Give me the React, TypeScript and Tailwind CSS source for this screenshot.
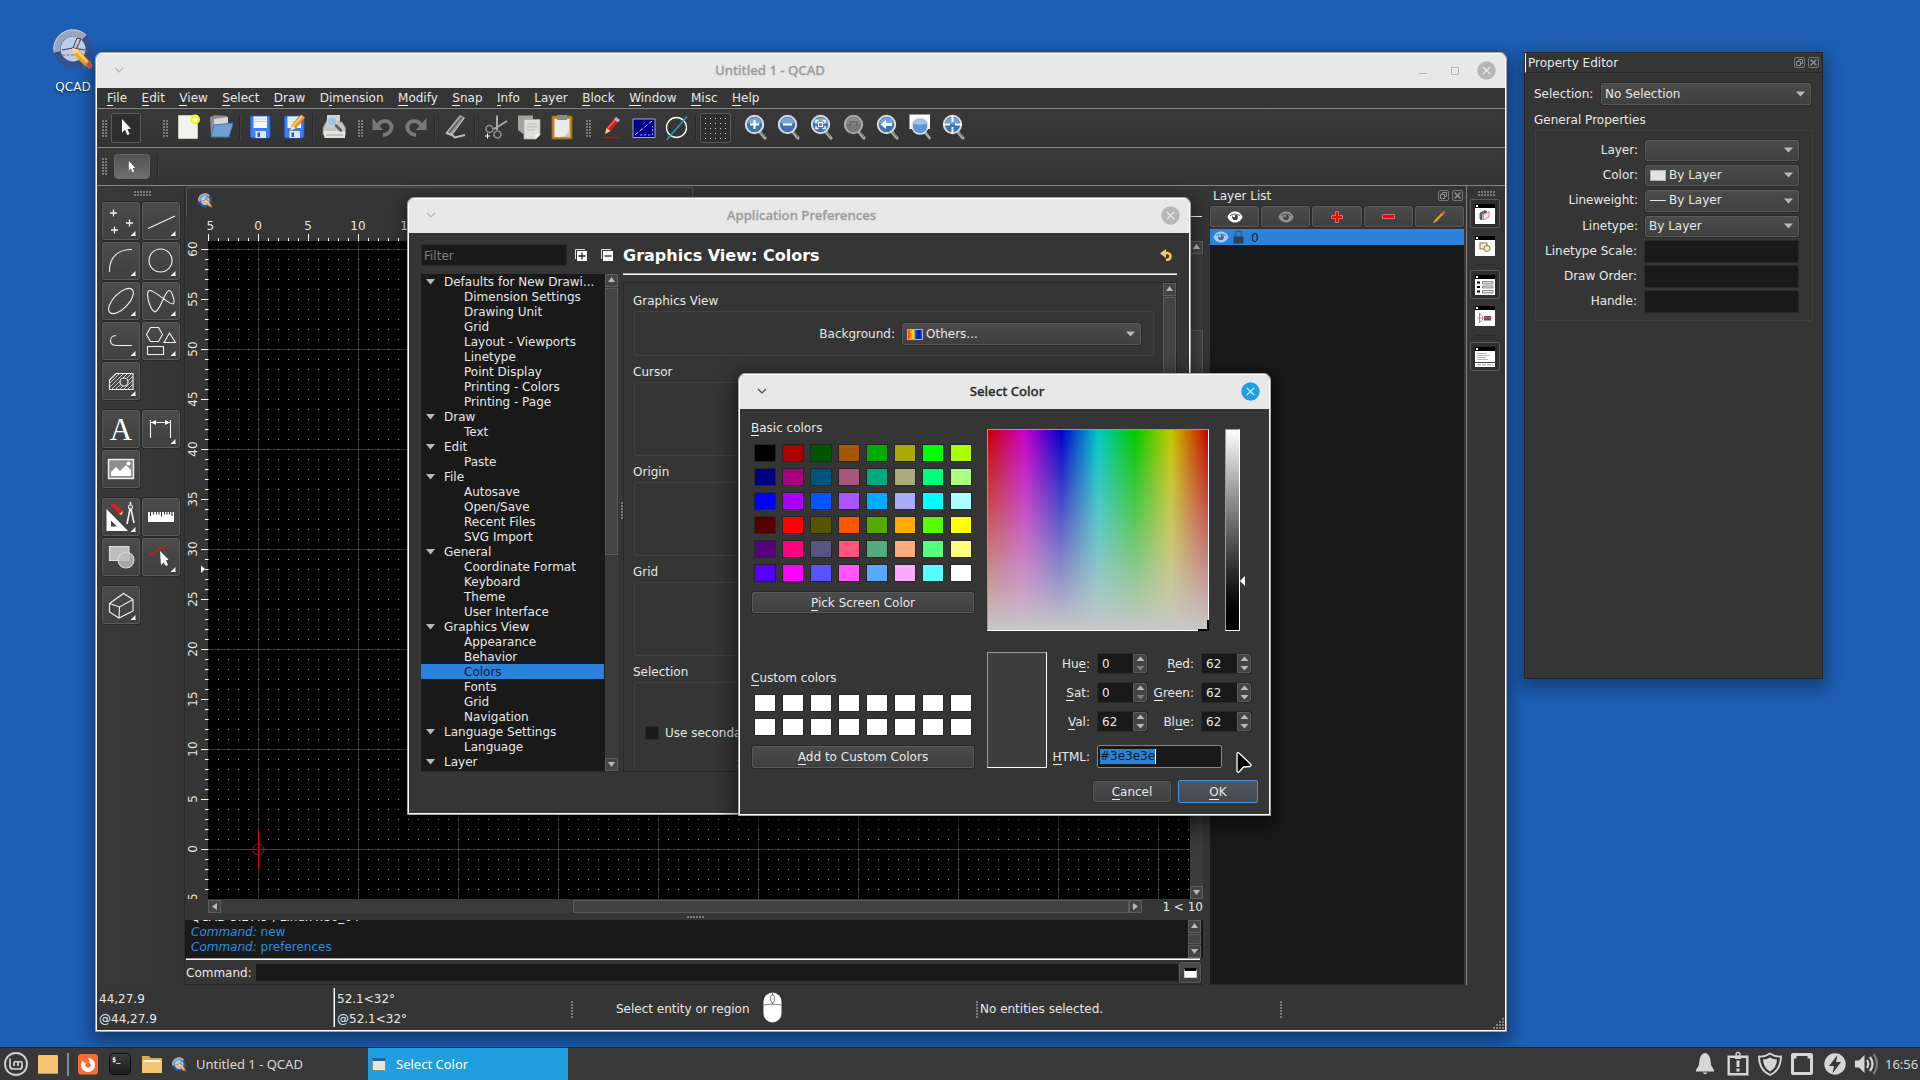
import React from "react";

type Kids = { children?: React.ReactNode };
const FONT = "font-['DejaVu_Sans',sans-serif]";
const UI = "font-['Noto_Sans',sans-serif]";

/* ---------- small building blocks ---------- */

function Tri({ dir }: { dir: "up" | "down" | "left" | "right" }) {
  const d = {
    up: "M0 5L3.5 0L7 5Z",
    down: "M0 1L3.5 6L7 1Z",
    left: "M6 0L1 3.5L6 7Z",
    right: "M1 0L6 3.5L1 7Z",
  }[dir];
  return (
    <svg width="7" height="7" viewBox="0 0 7 7" className="block shrink-0">
      <path d={d} fill="#b9b9b9" />
    </svg>
  );
}

function Grip({ cols, rows }: { cols: number; rows: number }) {
  const dots = [];
  for (let c = 0; c < cols; c++) for (let r = 0; r < rows; r++) dots.push(<rect key={c + "-" + r} x={c * 3} y={r * 3} width="2" height="2" fill="#7b7b7b" />);
  return (
    <svg width={cols * 3 - 1} height={rows * 3 - 1} className="block shrink-0">
      {dots}
    </svg>
  );
}

function BarGrip() {
  return (
    <div className="flex w-[13px] shrink-0 justify-center pl-[2px]">
      <Grip cols={2} rows={6} />
    </div>
  );
}

function BarSep() {
  return (
    <div className="flex h-6 w-[6px] shrink-0 justify-center">
      <div className="w-px bg-[#2a2a2a]" />
      <div className="w-px bg-[#404040]" />
    </div>
  );
}

function ScrollButton({ dir }: { dir: "up" | "down" | "left" | "right" }) {
  return (
    <div className="flex h-[13px] w-[13px] shrink-0 items-center justify-center border border-[#5e5e5e] bg-[#444444]">
      <Tri dir={dir} />
    </div>
  );
}

const BTN = "rounded-[2px] border border-[#5a5a5a] bg-linear-to-b from-[#4b4b4b] to-[#3f3f3f] outline outline-1 outline-[#2a2a2a]";

function Combo({ className, icon, text }: { className: string; icon?: React.ReactNode; text?: string }) {
  return (
    <div className={`flex shrink-0 items-center ${BTN} ${className}`}>
      {icon}
      <span className="leading-[15px]">{text}</span>
      <svg width="9" height="6" viewBox="0 0 9 6" className="mr-[5px] ml-auto block">
        <path d="M0 0.5H9L4.5 5.5Z" fill="#b9b9b9" />
      </svg>
    </div>
  );
}

function Key({ label }: { label: string }) {
  const [a, b, c] = label.split("_");
  return (
    <>
      {a}
      <span className="border-b border-[#eeeeee]">{b}</span>
      {c}
    </>
  );
}

function CloseDot({ active }: { active?: boolean }) {
  return (
    <svg width="19" height="19" viewBox="0 0 19 19" className="block shrink-0">
      <circle cx="9.5" cy="9.5" r="9.2" fill={active ? "#20a0e0" : "#b7b7b7"} />
      <path d="M5.8 5.8L13.2 13.2M13.2 5.8L5.8 13.2" stroke="#f2f2f2" strokeWidth="1.1" />
    </svg>
  );
}

function TitleBar({ title, active, main }: { title: string; active?: boolean; main?: boolean }) {
  return (
    <div className="flex h-[35px] shrink-0 items-center border-t border-white bg-[#e8e8e8] pb-[2px]">
      <div className={`shrink-0 ${main ? "w-[40px]" : "w-[58px]"}`}>
        <svg width="10" height="7" viewBox="0 0 10 7" className="ml-[17px] block">
          <path d="M1 1L5 5L9 1" fill="none" stroke={active ? "#444444" : "#b4b4b4"} strokeWidth="1.2" />
        </svg>
      </div>
      <div className={`flex-1 pl-[3px] text-center text-[13.2px] leading-[18px] font-medium ${UI} ${active ? "text-[#2b2b2b] [-webkit-text-stroke:0.3px_#2b2b2b]" : "text-[#9d9d9d] [-webkit-text-stroke:0.3px_#9d9d9d]"}`}>{title}</div>
      <div className={`flex shrink-0 items-center justify-end pr-[9px] ${main ? "w-[105px]" : "w-[56px]"}`}>
        {main && (
          <svg width="60" height="19" viewBox="0 0 60 19" className="block">
            <path d="M2 12.5H10" stroke="#b4b4b4" />
            <path d="M34.5 6.5H41.5V13.5H34.5Z" stroke="#b4b4b4" fill="none" />
          </svg>
        )}
        <CloseDot active={active} />
      </div>
    </div>
  );
}

function QcadIcon({ size }: { size: number }) {
  return (
    <svg width={size} height={size} viewBox="0 0 42 42" className="block shrink-0">
      <circle cx="20" cy="21" r="16" fill="#b9cfe8" />
      <circle cx="20" cy="21" r="16" fill="none" stroke="#34508f" strokeWidth="7" />
      <path d="M4 24A16 16 0 0 1 31 9.500" fill="none" stroke="#9aa4bd" strokeWidth="7" />
      <path d="M1 22A19 19 0 0 1 33 7" fill="none" stroke="#c6cbd8" strokeWidth="1" />
      <path d="M9 22L20 20L32 22M20 20L24 10L28 11L22 23" fill="none" stroke="#333f55" strokeWidth="1" />
      <path d="M9 27H22L27 12" fill="none" stroke="#d23c4a" strokeWidth="1" strokeDasharray="3 1.500" />
      <path d="M19 20L26 22L38 35L33 39L21 27Z" fill="#f5a21c" />
      <path d="M19 20L24 21L35.500 33.500L34 35Z" fill="#ffdc5e" />
      <path d="M19 20L25.500 22L21 26.500Z" fill="#f4d9ad" />
      <path d="M36 33L40.500 38L36.500 41.500L32.500 37.500Z" fill="#c4605c" />
    </svg>
  );
}

/* ---------- main tool bars ---------- */

function Ic({ children, w = 26 }: Kids & { w?: number }) {
  return (
    <div className="flex w-[33px] shrink-0 justify-center pb-[2px]">
      <svg width={w} height="28" viewBox="0 0 26 28" className="block shrink-0">
        {children}
      </svg>
    </div>
  );
}

const ARROW = "M9 6L9 19.500L12 16.800L14.300 22L16.600 21L14.300 16L18 15.800Z";

function Floppy() {
  return (
    <>
      <path d="M4 3H22Q23 3 23 4V24Q23 25 22 25H5L3.500 23.500V4Z" fill="#3f7ff0" stroke="#2458c4" />
      <path d="M6.500 3.500H20V15H6.500Z" fill="#f3f6fc" />
      <path d="M8.500 18H19V25H8.500Z" fill="#dfe6f4" />
      <path d="M10.500 19.500H13V24H10.500Z" fill="#2b57b8" />
      <path d="M7.500 6H19M7.500 8.500H19" stroke="#c5d0e6" />
    </>
  );
}

function Lens({ children, gray }: Kids & { gray?: boolean }) {
  return (
    <Ic>
      <path d="M17.500 18.500L23 25" stroke="#a9a9a4" strokeWidth="3.200" strokeLinecap="round" />
      <path d="M18 18L23 24" stroke="#5e5e5a" strokeWidth="1" />
      <circle cx="12.500" cy="11.500" r="8.700" fill={gray ? "#777777" : "#3a74b4"} stroke={gray ? "#aaaaaa" : "#d8dcdf"} strokeWidth="2" />
      <path d="M5.500 10A7.200 7.200 0 0 1 19.500 10Q12.500 13 5.500 10Z" fill={gray ? "#8c8c8c" : "#74a3d6"} />
      {children}
    </Ic>
  );
}

function ToolBar() {
  const grid = [];
  for (let i = 0; i < 5; i++) for (let j = 0; j < 5; j++) grid.push(<rect key={i * 5 + j} x={3 + i * 5} y={3 + j * 5} width="1" height="1" fill="#d6d6d6" />);
  return (
    <div className="flex h-[38px] shrink-0 items-center bg-linear-to-b from-[#393939] to-[#333333]">
      <BarGrip />
      <div className="ml-px flex h-[30px] w-[30px] shrink-0 items-center justify-center rounded-[2px] border border-[#5a5a5a] bg-[#2e2e2e]">
        <svg width="24" height="26" viewBox="0 0 24 26"><path d={ARROW} fill="#fff" transform="translate(-1 -2)" /></svg>
      </div>
      <div className="w-[17px]" />
      <BarGrip />
      <Ic>
        <path d="M3.500 2.500H22.500V25.500H3.500Z" fill="#f3f3ee" stroke="#c9c9c4" />
        <circle cx="20" cy="6.500" r="5" fill="#f6f03a" />
        <circle cx="20" cy="6.500" r="2.500" fill="#fffcc0" />
      </Ic>
      <Ic>
        <path d="M2 4L7 2L19 3L20 9V22L3 23Z" fill="#8d8d8a" />
        <path d="M6 6L20 4V12H6Z" fill="#d7d7d4" />
        <path d="M6 12L25 10L21 24H3Z" fill="#6fa0d6" stroke="#4277b3" />
      </Ic>
      <BarSep />
      <Ic><Floppy /></Ic>
      <div className="w-px" />
      <Ic>
        <Floppy />
        <path d="M9 18L11 12L20 1.500L24 4.500L14.500 15.500Z" fill="#f39a27" stroke="#a85d12" strokeWidth=".6" />
        <path d="M9 18L11 12L14.500 15.500Z" fill="#f7e2bb" />
        <path d="M12 13L21 3" stroke="#ffd77c" strokeWidth="1.300" />
      </Ic>
      <BarSep />
      <div className="w-px" />
      <Ic>
        <path d="M6 2H19V14H6Z" fill="#cdd4da" />
        <path d="M2 15L5 9H21L24.500 15V22H2Z" fill="#c4c4c1" stroke="#8e8e8b" strokeWidth=".7" />
        <path d="M2.500 18H24V25H3.500Z" fill="#e4e4e1" />
        <path d="M5 22H22" stroke="#a5a5a2" />
        <circle cx="11" cy="8.500" r="4.800" fill="#9fc3e8" stroke="#c9d4de" strokeWidth="1.500" />
        <path d="M15 12.500L20 17.500" stroke="#5a5a58" strokeWidth="2.500" strokeLinecap="round" />
      </Ic>
      <div className="w-[3px]" />
      <BarGrip />
      <Ic>
        <path d="M13 22C24 21 24 8 15 8C11 8 9 10 7.500 13" fill="none" stroke="#787878" strokeWidth="4" />
        <path d="M2.500 5V17H13Z" fill="#787878" />
      </Ic>
      <Ic>
        <path d="M13 22C2 21 2 8 11 8C15 8 17 10 18.500 13" fill="none" stroke="#787878" strokeWidth="4" />
        <path d="M23.500 5V17H13Z" fill="#787878" />
      </Ic>
      <BarSep />
      <div className="w-px" />
      <Ic>
        <path d="M3 20L17 2.500L21.500 5L9 22Z" fill="#9c9c99" stroke="#cfcfcc" strokeWidth=".8" />
        <path d="M5 21L19 4" stroke="#5b5b59" strokeWidth="1.500" />
        <path d="M3 20L9 22L12 24.500L22 22" fill="none" stroke="#bdbdba" strokeWidth="2" />
      </Ic>
      <BarSep />
      <div className="w-px" />
      <Ic>
        <path d="M14 17L14 2.500M11 16L24 8" stroke="#a9a9a6" strokeWidth="2" />
        <circle cx="6.500" cy="16" r="3.500" fill="none" stroke="#8d8d8a" strokeWidth="1.700" />
        <circle cx="14.500" cy="21.500" r="3.500" fill="none" stroke="#8d8d8a" strokeWidth="1.700" />
        <path d="M2 23H7M4.500 20.500V25.500" stroke="#ffffff" />
      </Ic>
      <Ic>
        <path d="M2 2.500H17V21H7L2 17Z" fill="#a3a3a0" />
        <path d="M8 6.500H24V22L20 26H8Z" fill="#dededb" stroke="#a9a9a6" strokeWidth=".8" />
        <path d="M11 11H21M11 14H21M11 17H19" stroke="#b9b9b6" />
        <path d="M24 21L19.500 26V21Z" fill="#f7f7f7" />
      </Ic>
      <Ic>
        <path d="M3 3H23V26H3Z" fill="#c48a2c" stroke="#8d5e15" />
        <path d="M5.500 6H20.500V24H5.500Z" fill="#ececea" />
        <path d="M8 2H18V7H8Z" fill="#8b8b86" />
        <path d="M20.500 18L14.500 24H20.500Z" fill="#c6c6c4" />
      </Ic>
      <div className="w-[3px]" />
      <BarGrip />
      <Ic>
        <path d="M5 24.500H22" stroke="#c40d0d" strokeWidth="1.500" />
        <path d="M7 21L8.500 15L17 5L21 8L12.500 18Z" fill="#d91616" />
        <path d="M10 15L18 6" stroke="#ff6b5e" strokeWidth="1.200" />
        <path d="M7 21L8.500 15L12.500 18Z" fill="#f2d0a5" />
        <path d="M16 6.500L18 4L22 7L20 9.500Z" fill="#b6b6b6" />
      </Ic>
      <Ic>
        <path d="M2 6H24V24.500H2Z" fill="#00008b" stroke="#a5a5c8" />
        <path d="M4 22L21 8" stroke="#c8c8ff" strokeDasharray="4 2" />
        <path d="M9 22H21.500V13" fill="none" stroke="#9c9cf0" strokeDasharray="2.500 1.500" />
      </Ic>
      <Ic>
        <circle cx="12.500" cy="14.500" r="10" fill="none" stroke="#ffffff" strokeWidth="1.300" />
        <path d="M3 26.500L23 3.500" stroke="#22a6b8" strokeWidth="1.300" />
      </Ic>
      <BarSep />
      <div className="ml-px flex h-[30px] w-[31px] shrink-0 items-center justify-center rounded-[3px] border border-[#5a5a5a] bg-[#2e2e2e]">
        <svg width="27" height="27" viewBox="0 0 27 27">{grid}</svg>
      </div>
      <div className="w-px" />
      <BarSep />
      <Lens><path d="M8 11.500H17M12.500 7V16" stroke="#fff" strokeWidth="2.200" /></Lens>
      <Lens><path d="M8 11.500H17" stroke="#fff" strokeWidth="2.200" /></Lens>
      <Lens>
        <path d="M8 10V7.500H10.500M14.500 7.500H17V10M17 13V15.500H14.500M10.500 15.500H8V13" fill="none" stroke="#fff" strokeWidth="1.400" />
        <rect x="10.500" y="9.500" width="4" height="4" fill="none" stroke="#fff" />
      </Lens>
      <Lens gray><path d="M9 13V9H16V13" fill="none" stroke="#666" strokeWidth="1.500" /></Lens>
      <Lens><path d="M6.500 11.500L12 7V10H18V13H12V16Z" fill="#fff" /></Lens>
      <Ic>
        <path d="M17 18L22.500 25" stroke="#a9a9a4" strokeWidth="2.800" strokeLinecap="round" />
        <path d="M2.500 1.500H23V16H2.500Z" fill="#ffffff" />
        <circle cx="13" cy="13" r="8" fill="#5f97d6" stroke="#e3e6e9" strokeWidth="1.500" />
        <path d="M6.500 10.500A7 7 0 0 1 19.500 10.500Q13 13 6.500 10.500Z" fill="#9cc2ee" />
      </Ic>
      <Lens>
        <path d="M12.500 2.500V9M12.500 14V20.500M3.500 11.500H10M15 11.500H21.500" stroke="#fff" strokeWidth="2" />
      </Lens>
    </div>
  );
}

const MENUS = ["_F_ile", "_E_dit", "_V_iew", "_S_elect", "_D_raw", "D_i_mension", "_M_odify", "_S_nap", "_I_nfo", "_L_ayer", "_B_lock", "_W_indow", "_M_isc", "_H_elp"];

/* ---------- left tool palette ---------- */

function Tool({ children, flat }: Kids & { flat?: boolean }) {
  return (
    <div className={`h-[38px] w-[38px] shrink-0 ${BTN}`}>
      <svg width="36" height="36" viewBox="1 1 36 36" className="block" fill="none" stroke="#f2f2f2" strokeWidth="1.100">
        {children}
        {!flat && <path d="M33.500 29V34H28.500Z" fill="#fff" stroke="none" />}
      </svg>
    </div>
  );
}

function Palette() {
  return (
    <div className="flex w-[88px] shrink-0 flex-col border-r border-[#2a2a2a] bg-linear-to-r from-[#393939] to-[#343434]">
      <div className="flex h-[16px] items-center justify-center pb-px pl-[4px]">
        <Grip cols={6} rows={2} />
      </div>
      <div className="flex flex-col gap-[10px] pl-[5px]">
        <div className="flex flex-wrap gap-[2px]">
          <Tool><path d="M8 11H15M11.500 7.500V14.500M24 21H31M27.500 17.500V24.500M9 28H16M12.500 24.500V31.500" strokeWidth="1.300" /></Tool>
          <Tool><path d="M6 26.500L33 14" /></Tool>
          <Tool><path d="M7.500 30C7 15 16 7.500 30 7.500" /></Tool>
          <Tool><circle cx="18.500" cy="18.500" r="11.500" /></Tool>
          <Tool><ellipse cx="19" cy="19" rx="16" ry="7.500" transform="rotate(-46 19 19)" /></Tool>
          <Tool><path d="M13 30C8 28 2 8 8 8.500C14 9 26 22 31 22C34 22 30 8 27 8.500C22 10 19 28 13 30Z" /></Tool>
          <Tool><path d="M14 13.500C6.500 14 6.500 23.500 15 23.500H30" /></Tool>
          <Tool><path d="M4.500 12.500L8.500 5.500H16.500L20.500 12.500L16.500 19.500H8.500ZM22 20.500L27.500 11L33.500 20.500ZM5.500 24.500H21.500V32.500H5.500Z" /></Tool>
          <Tool>
            <path d="M7.500 18L14 11.500H31V27.500H7.500Z" />
            <path d="M8 21L17 12M8 25L21 12M10 27L25 12M14 27L20 21M25 16L29 12M18 27L31 14M22 27L31 18M26 27L31 22" strokeWidth=".8" />
            <circle cx="22" cy="20" r="4" fill="#484848" />
          </Tool>
        </div>
        <div className="flex flex-wrap gap-[2px]">
          <div className={`flex h-[38px] w-[38px] items-center justify-center ${BTN} font-['Liberation_Serif',serif] text-[31px] leading-none text-white`}>A</div>
          <Tool>
            <path d="M8.500 10V28M28.500 10V28M9 12.500H28" />
            <path d="M9 12.500L14 10V15ZM28 12.500L23 10V15Z" fill="#fff" stroke="none" />
          </Tool>
          <Tool flat>
            <rect x="6.500" y="9.500" width="25" height="19" fill="#8e8e8e" strokeWidth="1.400" />
            <path d="M9 26V22L14 17L18 21L24 15L29 20V26Z" fill="#fff" stroke="none" />
            <circle cx="26.500" cy="13.500" r="2" fill="#fff" stroke="none" />
          </Tool>
        </div>
        <div className="flex flex-wrap gap-[2px]">
          <Tool>
            <path fillRule="evenodd" d="M4.500 11L26 33H4.500ZM9 22.500V28.500H15Z" fill="#fff" stroke="none" />
            <path d="M9 7L12 5L21 13L20 17L17 16Z" fill="#d92020" stroke="none" />
            <path d="M17 16L20 17L21 13Z" fill="#f0c67c" stroke="none" />
            <circle cx="28.500" cy="9" r="2" />
            <path d="M28.500 4V7M28 11L25 26M29 11L32 25" strokeWidth="1.600" />
          </Tool>
          <Tool flat>
            <path d="M6 14H32V24H6Z" fill="#fff" stroke="none" />
            <path d="M8.500 14V18M11.500 14V16.500M14.500 14V16.500M17 14V16.500M19.500 14V18.500M22.500 14V16.500M25 14V16.500M27.500 14V16.500M30 14V18" stroke="#333" />
          </Tool>
          <Tool flat>
            <path d="M7.500 8.500H27V22.500H7.500Z" fill="#bdbdbd" stroke="#e0e0e0" />
            <circle cx="24" cy="22" r="8" fill="#bdbdbdd0" stroke="#d8d8d8" />
          </Tool>
          <Tool>
            <path d="M6 18L26 6.500" stroke="#ee1111" />
            <path d="M18 13L19 27L21.500 24.500L24 28L26 27L24 22.500L26.500 21.500Z" fill="#fff" stroke="none" />
          </Tool>
        </div>
        <Tool><path d="M7.500 17.500L21.500 7.500L31 13.500V25L17 32L7.500 26ZM7.500 17.500L17.500 21L31 13.500M17.500 21L17 32" /></Tool>
      </div>
    </div>
  );
}

/* ---------- drawing area with rulers ---------- */

function Drawing() {
  const hticks = [];
  for (let i = -5; i <= 93; i++) {
    const x = 258.5 + i * 10;
    hticks.push(<path key={i} d={`M${x} ${i % 5 === 0 ? 234 : 238}V241`} stroke="#fff" />);
  }
  const vticks = [];
  for (let i = -4; i <= 60; i++) {
    const y = 849.5 - i * 10;
    vticks.push(<path key={i} d={`M${i % 5 === 0 ? 201 : 205} ${y}H208`} stroke="#fff" />);
  }
  const vlines = Array.from({ length: 10 }, (_, i) => 258.5 + i * 100);
  const hlines = Array.from({ length: 7 }, (_, i) => 249.5 + i * 100);
  return (
    <svg width="1004" height="682" viewBox="186 217 1004 682" className="block shrink-0" fontFamily="DejaVu Sans" fontSize="12" fill="#e4e4e4">
      <defs>
        <pattern id="dots" x="208" y="249" width="10" height="10" patternUnits="userSpaceOnUse">
          <rect width="1" height="1" fill="#8e8e8e" />
        </pattern>
      </defs>
      <rect x="208" y="241" width="982" height="658" fill="#000" />
      {vlines.map((x) => <path key={x} d={`M${x} 241V899`} stroke="#333" />)}
      {hlines.map((y) => <path key={y} d={`M208 ${y}H1190`} stroke="#333" />)}
      <rect x="208" y="241" width="982" height="658" fill="url(#dots)" />
      {hticks}
      {vticks}
      <path d="M201 565.500L205 569L201 573Z" fill="#fff" />
      {[0, 5, 10, 15].map((n) => (
        <text key={n} x={258 + n * 10} y="230" textAnchor="middle">{n}</text>
      ))}
      <text x="206.500" y="230">5</text>
      {Array.from({ length: 13 }, (_, i) => i * 5).map((n) => (
        <text key={n} transform={`translate(197 ${849 - n * 10}) rotate(-90)`} textAnchor="middle">{n}</text>
      ))}
      <text transform="translate(197 901) rotate(-90)">5</text>
      <path d="M258.500 829V870M238 849.500H279" stroke="#e00000" />
      <circle cx="258.500" cy="849.500" r="5.500" fill="none" stroke="#a01818" />
    </svg>
  );
}

function Central() {
  return (
    <div className="flex min-w-0 flex-1 flex-col">
      <div className="flex h-[31px] shrink-0 pl-px">
        <div className="mt-px flex w-[507px] border-t border-r border-l border-[#505050] pt-[5px] pl-[11px]">
          <QcadIcon size={15} />
        </div>
        <div className="mr-[1px] flex-1 border-b border-[#f0f0f0]" />
      </div>
      <div className="flex h-[682px] shrink-0 pl-px">
        <Drawing />
        <div className="flex w-[13px] flex-col bg-[#3b3b3b]">
          <div className="h-[24px] bg-[#353535]" />
          <ScrollButton dir="up" />
          <div className="mt-[76px] h-[300px] border border-[#5a5a5a] bg-[#444444]" />
          <div className="flex-1" />
          <ScrollButton dir="down" />
        </div>
      </div>
      <div className="mt-px flex h-[13px] shrink-0 items-center pl-[23px]">
        <ScrollButton dir="left" />
        <div className="h-[13px] w-[352px] bg-[#3b3b3b]" />
        <div className="h-[13px] w-[556px] border border-[#5a5a5a] bg-[#434343]" />
        <ScrollButton dir="right" />
        <div className="flex-1 pt-px text-right leading-[13px]">1 &lt; 10</div>
      </div>
      <div className="flex h-[7px] shrink-0 items-center pl-[502px]">
        <Grip cols={6} rows={1} />
      </div>
      <div className="flex h-[38px] shrink-0 bg-[#191919] pr-[2px] pl-px">
        <div className="flex flex-1 flex-col justify-end overflow-hidden pb-[3px] pl-[5px] leading-[15px] text-[#2e8de4]">
          <div className="shrink-0 text-[#eeeeee]">QCAD 3.27.9 , Linux x86_64</div>
          <div className="shrink-0"><i>Command:</i> new</div>
          <div className="shrink-0"><i>Command:</i> preferences</div>
        </div>
        <div className="flex w-[13px] flex-col justify-between bg-[#3b3b3b]">
          <ScrollButton dir="up" />
          <div className="h-[10px] border border-[#5a5a5a] bg-[#444444]" />
          <ScrollButton dir="down" />
        </div>
      </div>
      <div className="mr-[3px] ml-px h-[2px] shrink-0 border-t border-[#a0a0a0] bg-white" />
      <div className="mt-[2px] flex h-[21px] shrink-0 items-center pl-px">
        <span className="w-[70px] pt-[2px] leading-[15px]">Command:</span>
        <div className="h-[17px] w-[922px] bg-[#191919]" />
        <div className={`ml-px flex h-[21px] w-[22px] items-center justify-center ${BTN}`}>
          <div className="h-[10px] w-[13px] border border-t-[3px] border-[#cccccc] border-t-black bg-white" />
        </div>
      </div>
      <div className="mt-px h-px shrink-0 bg-[#2a2a2a]" />
    </div>
  );
}

/* ---------- docks on the right ---------- */

function DockButtons() {
  return (
    <svg width="25" height="11" viewBox="0 0 25 11" className="ml-auto block" fill="none" stroke="#909090">
      <rect x=".5" y=".5" width="10" height="10" rx="1.500" stroke="#777777" />
      <path d="M4.500 4.500V2.500H8.500V6.500H6.500M2.500 4.500H6.500V8.500H2.500Z" />
      <rect x="14.500" y=".5" width="10" height="10" rx="1.500" stroke="#777777" />
      <path d="M16.500 2.500L22.500 8.500M22.500 2.500L16.500 8.500" strokeWidth="1.500" />
    </svg>
  );
}

function Eye({ color, pupil }: { color: string; pupil: string }) {
  return (
    <svg width="16" height="12" viewBox="0 0 16 12" className="block shrink-0">
      <path d="M0.500 6C2 2 5 .5 8 .5S14 2 15.500 6C14 10 11 11.500 8 11.500S2 10 0.500 6Z" fill={color} />
      <path d="M3 5C5 2.500 11 2.500 13 5" stroke={pupil} fill="none" strokeWidth=".8" />
      <circle cx="8" cy="6.200" r="2.800" fill={pupil} />
      <circle cx="7" cy="5" r="1.200" fill={color} />
    </svg>
  );
}

function LayerList() {
  const icons = [
    <Eye key="a" color="#ffffff" pupil="#3b3b3b" />,
    <Eye key="b" color="#8f8f8f" pupil="#454545" />,
    <svg key="c" width="12" height="12" viewBox="0 0 12 12"><path d="M4.500 .5H7.500V4.500H11.500V7.500H7.500V11.500H4.500V7.500H.5V4.500H4.500Z" fill="#f00" stroke="#e08080" strokeWidth=".8" /></svg>,
    <svg key="d" width="13" height="5" viewBox="0 0 13 5"><path d="M.5 .5H12.500V4.500H.5Z" fill="#f00" stroke="#e08080" strokeWidth=".8" /></svg>,
    <svg key="e" width="15" height="14" viewBox="0 0 15 14"><path d="M1 13L2.500 10L11.500 1L13.500 2.500L4 12Z" fill="#d8a02a" /><path d="M11.500 1L13.500 2.500L11 5L9.500 3Z" fill="#e04a30" /></svg>,
  ];
  return (
    <div className="flex w-[256px] shrink-0 flex-col">
      <div className="flex h-[19px] items-center pr-[3px] pl-[3px]">
        <span className="pt-[2px] leading-[15px]">Layer List</span>
        <DockButtons />
      </div>
      <div className="mt-px flex h-[21px] gap-[2px] pr-[2px]">
        {icons.map((ic, i) => (
          <div key={i} className={`flex flex-1 items-center justify-center ${BTN}`}>{ic}</div>
        ))}
      </div>
      <div className="mt-[2px] mr-[2px] flex-1 border-b border-[#2a2a2a] bg-[#191919]">
        <div className="flex h-[16px] items-center bg-[#2a82da] pl-[3px]">
          <Eye color="#a9cdf2" pupil="#2a6cb4" />
          <svg width="11" height="14" viewBox="0 0 11 14" className="ml-[4px] block shrink-0">
            <path d="M2.500 7V4C2.500 0 8.500 0 8.500 4V7" fill="none" stroke="#4a5966" strokeWidth="1.500" />
            <path d="M.5 6.500H10.500V13.500H.5Z" fill="#2b4155" />
          </svg>
          <span className="ml-[7px] pt-[2px] leading-[15px] text-[#10202f]">0</span>
        </div>
      </div>
    </div>
  );
}

function PanelIcon({ children, framed }: Kids & { framed?: boolean }) {
  return (
    <div className={`flex h-[29px] w-[30px] items-center justify-center rounded-[2px] border ${framed ? "border-[#5c5c5c] bg-[#2e2e2e]" : "border-transparent"}`}>
      <svg width="20" height="20" viewBox="0 0 20 20" className="block" fill="none">
        <rect width="20" height="20" fill="#fff" />
        <rect width="20" height="4" fill="#000" />
        <rect x="1" y="1" width="2" height="2" fill="#fff" />
        {children}
      </svg>
    </div>
  );
}

function DockBar() {
  return (
    <div className="flex w-[39px] shrink-0 flex-col items-center border-l border-[#808080] pr-[2px]">
      <div className="flex h-[13px] items-center pt-[2px] pl-[2px]"><Grip cols={6} rows={2} /></div>
      <PanelIcon framed>
        <path d="M5 9L10 6.500L12 8L7 10V16L5 15Z" fill="#777" stroke="#333" strokeWidth=".7" />
        <path d="M8.500 10.500L14 7.500V13L8.500 16Z" fill="#fbe9e9" stroke="#c55" strokeWidth=".7" />
      </PanelIcon>
      <div className="mt-[3px]">
        <PanelIcon>
          <rect x="5" y="7" width="7" height="6" fill="#f6edc6" stroke="#857b4a" />
          <circle cx="12" cy="12.500" r="3" fill="#f6edc6" stroke="#857b4a" />
        </PanelIcon>
      </div>
      <div className="mt-[4px] mb-[5px] h-px w-5 bg-[#2b2b2b]" />
      <PanelIcon framed>
        <path d="M2 6.500H5V8.500H2ZM2 11H5V13H2ZM2 15.500H5V17.500H2Z" fill="#000" />
        <path d="M7.500 6.500H18V9H7.500ZM7.500 11H18V13H7.500ZM7.500 15.500H18V18H7.500Z" fill="#ddd" stroke="#777" strokeWidth=".8" />
      </PanelIcon>
      <div className="mt-[2px]">
        <PanelIcon>
          <path d="M4.500 7V17M5 8L7.500 10V14L5 16" stroke="#777" strokeWidth=".8" />
          <path d="M9 10H16V14.500H9Z" fill="#555" />
          <path d="M2 12H18" stroke="#d66" strokeWidth=".7" />
        </PanelIcon>
      </div>
      <div className="mt-[5px] mb-[6px] h-px w-5 bg-[#2b2b2b]" />
      <PanelIcon framed>
        <path d="M2 6.500H12M2 8.500H14M2 10.500H11M2 12.500H13" stroke="#aaa" strokeWidth=".9" />
        <path d="M0 15.500H20" stroke="#444" />
        <path d="M2 17.800H18" stroke="#999" strokeDasharray="4 1" />
      </PanelIcon>
    </div>
  );
}

function StatusBar() {
  return (
    <div className="flex h-[45px] shrink-0 items-stretch leading-[15px]">
      <div className="w-[236px] pt-[7px] pl-[2px]">
        <div>44,27.9</div>
        <div className="mt-[5px]">@44,27.9</div>
      </div>
      <div className="my-[3px] w-[2px] border-l border-[#909090] bg-white" />
      <div className="w-[236px] pt-[7px] pl-[2px]">
        <div>52.1&lt;32°</div>
        <div className="mt-[5px]">@52.1&lt;32°</div>
      </div>
      <div className="mt-[16px]"><Grip cols={1} rows={6} /></div>
      <div className="flex w-[403px] items-center pb-px pl-[43px]">
        <span className="pt-[5px]">Select entity or region</span>
        <svg width="19" height="31" viewBox="0 0 19 31" className="ml-[13px] block">
          <rect x=".5" y=".5" width="18" height="30" rx="9" fill="#fff" />
          <path d="M.5 13Q9.500 11 18.500 13M9.500 0V12" stroke="#777" fill="none" />
          <rect x="7.700" y="3" width="3.600" height="7.500" rx="1.800" fill="#fff" stroke="#777" />
        </svg>
      </div>
      <div className="mt-[16px]"><Grip cols={1} rows={6} /></div>
      <div className="flex w-[302px] items-center pt-[4px] pl-[2px]">No entities selected.</div>
      <div className="mt-[16px]"><Grip cols={1} rows={6} /></div>
      <svg width="13" height="13" viewBox="0 0 13 13" className="mt-auto ml-auto block" fill="#808080">
        <path d="M10 1H12V3H10ZM10 4H12V6H10ZM10 7H12V9H10ZM10 10H12V12H10ZM7 4H9V6H7ZM7 7H9V9H7ZM7 10H9V12H7ZM4 7H6V9H4ZM4 10H6V12H4ZM1 10H3V12H1Z" />
      </svg>
    </div>
  );
}

function MainWindow() {
  return (
    <div className="absolute top-[52px] left-[95px] flex h-[980px] w-[1412px] flex-col overflow-hidden rounded-t-[7px] border border-[#a8a39c] bg-[#353535] shadow-[0_6px_16px_3px_rgba(0,0,0,0.4)]">
      <div className="flex flex-1 flex-col border border-t-0 border-white">
        <TitleBar title="Untitled 1 - QCAD" main />
        <div className="flex h-[20px] shrink-0 items-center pl-[3px]">
          {MENUS.map((m, i) => (
            <span key={i} className="pr-[7.5px] pl-[7px] leading-[14px]"><Key label={m} /></span>
          ))}
        </div>
        <div className="h-px shrink-0 bg-[#868686]" />
        <ToolBar />
        <div className="h-px shrink-0 bg-[#868686]" />
        <div className="flex h-[37px] shrink-0 items-center bg-linear-to-b from-[#393939] to-[#333333]">
          <BarGrip />
          <div className="ml-[4px] flex h-[25px] w-[36px] items-center justify-center rounded-[4px] border border-[#6a6a6a] bg-linear-to-b from-[#505050] to-[#707070]">
            <svg width="12" height="14" viewBox="5 5 17 19"><path d={ARROW} fill="#fff" /></svg>
          </div>
          <div className="w-[5px]" />
          <BarSep />
        </div>
        <div className="h-px shrink-0 bg-[#868686]" />
        <div className="flex h-[799px] shrink-0">
          <Palette />
          <Central />
          <div className="w-[7px] shrink-0" />
          <LayerList />
          <DockBar />
        </div>
        <StatusBar />
      </div>
    </div>
  );
}

function PropRow({ label, h, children }: Kids & { label: string; h: string }) {
  return (
    <div className={`flex items-center justify-end ${h}`}>
      <span className="mr-[7px] leading-[15px]">{label}</span>
      {children}
    </div>
  );
}

const INPUT = "shrink-0 rounded-[2px] border border-[#2a2a2a] bg-[#191919]";

function PropertyEditor() {
  return (
    <div className="absolute top-[52px] left-[1524px] flex h-[627px] w-[299px] flex-col border border-[#262626] bg-[#353535] shadow-[0_6px_16px_3px_rgba(0,0,0,0.35)]">
      <div className="flex h-[20px] shrink-0 items-center border-b border-l border-b-[#262626] border-l-white pr-[3px] pl-[2px]">
        <span className="pt-[2px] leading-[15px]">Property Editor</span>
        <DockButtons />
      </div>
      <div className="mt-[10px] flex items-center pl-[9px]">
        <span className="w-[67px] leading-[15px]">Selection:</span>
        <Combo className="h-[22px] w-[210px] pl-[3px]" text="No Selection" />
      </div>
      <div className="mt-[8px] pl-[9px] leading-[15px]">General Properties</div>
      <div className="mt-[2px] ml-[10px] flex h-[191px] w-[278px] flex-col gap-[3px] rounded-[2px] border border-[#3f3f3f] pt-[8px] pr-[13px]">
        <PropRow label="Layer:" h="h-[22px]"><Combo className="h-[21px] w-[154px] pl-[4px]" /></PropRow>
        <PropRow label="Color:" h="h-[22px]">
          <Combo className="h-[21px] w-[154px] pl-[4px]" text="By Layer" icon={<div className="mr-[3px] h-[11px] w-[16px] border border-[#b0b0b0] bg-[#e3e3e3]" />} />
        </PropRow>
        <PropRow label="Lineweight:" h="h-[23px]">
          <Combo className="h-[22px] w-[154px] pl-[4px]" text="By Layer" icon={<div className="mr-[3px] h-px w-[16px] bg-[#e3e3e3]" />} />
        </PropRow>
        <PropRow label="Linetype:" h="h-[22px]"><Combo className="h-[21px] w-[154px] pl-[3px]" text="By Layer" /></PropRow>
        <PropRow label="Linetype Scale:" h="h-[22px]"><div className={`h-[23px] w-[155px] ${INPUT}`} /></PropRow>
        <PropRow label="Draw Order:" h="h-[22px]"><div className={`h-[23px] w-[155px] ${INPUT}`} /></PropRow>
        <PropRow label="Handle:" h="h-[22px]"><div className={`h-[23px] w-[155px] ${INPUT}`} /></PropRow>
      </div>
    </div>
  );
}

/* ---------- preferences ---------- */

const TREE: [string, string[]][] = [
  ["Defaults for New Drawi...", ["Dimension Settings", "Drawing Unit", "Grid", "Layout - Viewports", "Linetype", "Point Display", "Printing - Colors", "Printing - Page"]],
  ["Draw", ["Text"]],
  ["Edit", ["Paste"]],
  ["File", ["Autosave", "Open/Save", "Recent Files", "SVG Import"]],
  ["General", ["Coordinate Format", "Keyboard", "Theme", "User Interface"]],
  ["Graphics View", ["Appearance", "Behavior", "Colors", "Fonts", "Grid", "Navigation"]],
  ["Language Settings", ["Language"]],
  ["Layer", ["Attributes"]],
];

function TreeIcon({ plus }: { plus?: boolean }) {
  return (
    <svg width="12" height="12" viewBox="0 0 12 12" className="block shrink-0">
      <path d="M.5 10V.5H10" fill="none" stroke="#dcdcdc" />
      <rect x="2" y="2" width="10" height="10" fill="#fff" />
      <path d={plus ? "M3.500 7H10.500M7 3.500V10.500" : "M3.500 7H10.500"} stroke="#222" strokeWidth="1.300" />
    </svg>
  );
}

function Group({ title, h, children }: Kids & { title: string; h: string }) {
  return (
    <div className="mb-[8px] shrink-0">
      <div className="-ml-px pt-px leading-[15px]">{title}</div>
      <div className={`mt-[2px] rounded-[2px] border border-[#414141] ${h}`}>{children}</div>
    </div>
  );
}

function Preferences() {
  return (
    <div className="absolute top-[197px] left-[407px] flex h-[618px] w-[784px] flex-col overflow-hidden rounded-t-[7px] border border-[#a8a39c] bg-[#353535] shadow-[0_5px_16px_3px_rgba(0,0,0,0.4)]">
      <div className="flex flex-1 flex-col border border-t-0 border-white">
        <TitleBar title="Application Preferences" />
        <div className="flex pt-[11px] pl-[12px]">
          <div className="w-[197px]">
            <div className="flex h-[22px] items-center">
              <div className={`flex h-[22px] w-[146px] items-center pt-px pl-[2px] text-[#7f7f7f] ${INPUT}`}>Filter</div>
              <div className="ml-[8px]"><TreeIcon plus /></div>
              <div className="ml-[14px]"><TreeIcon /></div>
            </div>
            <div className="mt-[8px] flex h-[498px] border-b border-[#2a2a2a] bg-[#191919]">
              <div className="w-[183px] overflow-hidden">
                {TREE.map(([name, kids]) => (
                  <React.Fragment key={name}>
                    <div className="flex h-[15px] items-center pl-[5px] whitespace-nowrap">
                      <svg width="9" height="6" viewBox="0 0 9 6" className="mr-[9px] block shrink-0"><path d="M0 0H9L4.500 5.500Z" fill="#b9b9b9" /></svg>
                      {name}
                    </div>
                    {kids.map((k) => (
                      <div key={k} className={`h-[15px] pl-[43px] leading-[17px] whitespace-nowrap ${k === "Colors" ? "bg-[#2a82da] text-[#10202f]" : ""}`}>{k}</div>
                    ))}
                  </React.Fragment>
                ))}
              </div>
              <div className="ml-px flex w-[13px] flex-col bg-[#3b3b3b]">
                <ScrollButton dir="up" />
                <div className="mt-px h-[267px] border border-[#5a5a5a] bg-[#444444]" />
                <div className="flex-1" />
                <ScrollButton dir="down" />
              </div>
            </div>
          </div>
          <div className="flex w-[5px] justify-end pt-[258px]"><Grip cols={1} rows={6} /></div>
          <div className="w-[554px]">
            <div className="flex h-[22px] items-center">
              <span className="pt-[2px] text-[16px] leading-[20px] font-bold text-white">Graphics View: Colors</span>
              <svg width="12" height="12" viewBox="0 0 12 12" className="mr-[5px] ml-auto block">
                <path d="M2 4H7C12 4 11.500 11 6 11" fill="none" stroke="#ffc670" strokeWidth="2.400" />
                <path d="M6 0V9L0 4.500Z" fill="#ffc670" />
              </svg>
            </div>
            <div className="mt-[7px] h-[2px] border-t border-[#a0a0a0] bg-white" />
            <div className="mt-[7px] flex h-[490px] border border-[#2a2a2a]">
              <div className="flex w-[530px] flex-col overflow-hidden pt-[10px] pl-[10px]">
                <Group title="Graphics View" h="h-[45px]">
                  <div className="flex items-center justify-end pt-[11px] pr-[12px]">
                    <span className="mr-[7px]">Background:</span>
                    <Combo
                      className="h-[22px] w-[239px] pl-[4px]"
                      text="Others..."
                      icon={<div className="mr-[3px] h-[11px] w-[16px] border border-[#b0b0b0] bg-[linear-gradient(to_right,#ff3010,#ffe000_35%,#ffe000_42%,#2a70a0_52%,#0020e0_65%,#0020c0_85%,#2060d0)]" />}
                    />
                  </div>
                </Group>
                <Group title="Cursor" h="h-[74px]" />
                <Group title="Origin" h="h-[74px]" />
                <Group title="Grid" h="h-[74px]" />
                <Group title="Selection" h="h-[200px]">
                  <div className="mt-[41px] ml-[10px] flex items-center">
                    <div className={`mr-[6px] h-[14px] w-[14px] ${INPUT}`} />
                    Use secondary color
                  </div>
                  <div className="mt-[14px] pl-[102px] leading-[15px]">Selection:</div>
                </Group>
              </div>
              <div className="ml-auto flex w-[13px] flex-col bg-[#3b3b3b]">
                <ScrollButton dir="up" />
                <div className="mt-px h-[400px] border border-[#5a5a5a] bg-[#444444]" />
              </div>
            </div>
          </div>
        </div>
      </div>
    </div>
  );
}

/* ---------- colour dialog ---------- */

const SWATCHES = [
  "#000000", "#aa0000", "#005500", "#aa5500", "#00aa00", "#aaaa00", "#00ff00", "#aaff00",
  "#00007f", "#aa007f", "#00557f", "#aa557f", "#00aa7f", "#aaaa7f", "#00ff7f", "#aaff7f",
  "#0000ff", "#aa00ff", "#0055ff", "#aa55ff", "#00aaff", "#aaaaff", "#00ffff", "#aaffff",
  "#550000", "#ff0000", "#555500", "#ff5500", "#55aa00", "#ffaa00", "#55ff00", "#ffff00",
  "#55007f", "#ff007f", "#55557f", "#ff557f", "#55aa7f", "#ffaa7f", "#55ff7f", "#ffff7f",
  "#5500ff", "#ff00ff", "#5555ff", "#ff55ff", "#55aaff", "#ffaaff", "#55ffff", "#ffffff",
];

function Swatches({ colors }: { colors: string[] }) {
  return (
    <div className="mt-[8px] ml-[2px] grid w-[218px] grid-cols-8 gap-x-[6px] gap-y-[6px]">
      {colors.map((c, i) => (
        <div key={i} className="h-[18px] w-[22px] border border-[#262626]" style={{ backgroundColor: c }} />
      ))}
    </div>
  );
}

function Spin({ value, w, zero }: { value: string; w: string; zero?: boolean }) {
  return (
    <div className={`flex h-[21px] overflow-hidden ${INPUT} ${w}`}>
      <span className="flex-1 pl-[4px] leading-[20px]">{value}</span>
      <div className="flex w-[14px] items-center justify-center rounded-r-[2px] border border-[#5a5a5a] bg-[#444444]">
        <svg width="9" height="15" viewBox="0 0 9 15" className="block shrink-0">
          <path d="M0.500 5L4.500 0.500L8.500 5Z" fill="#b9b9b9" />
          <path d="M0.500 10L4.500 14.500L8.500 10Z" fill={zero ? "#7d7d7d" : "#b9b9b9"} />
        </svg>
      </div>
    </div>
  );
}

function SpinRow({ a, av, b, bv, zero }: { a: string; av: string; b: string; bv: string; zero?: boolean }) {
  return (
    <div className="mb-[8px] flex h-[21px] items-center leading-[14px]">
      <div className="w-[43px] text-right"><Key label={a} /></div>
      <div className="w-[7px]" />
      <Spin value={av} w="w-[51px]" zero={zero} />
      <div className="w-[46px] text-right"><Key label={b} /></div>
      <div className="w-[7px]" />
      <Spin value={bv} w="w-[51px]" />
    </div>
  );
}

function ColorDialog() {
  const sunken = "border border-t-[#9b9b9b] border-r-white border-b-white border-l-[#9b9b9b]";
  return (
    <div className="absolute top-[373px] left-[738px] flex h-[443px] w-[533px] flex-col overflow-hidden rounded-t-[7px] border border-[#a8a39c] bg-[#353535] shadow-[0_6px_20px_5px_rgba(0,0,0,0.5)]">
      <div className="flex flex-1 flex-col border border-t-0 border-white">
        <TitleBar title="Select Color" active />
        <div className="flex">
          <div className="w-[247px] pt-[11px] pl-[12px]">
            <div className="-ml-px pt-px leading-[15px]"><Key label="_B_asic colors" /></div>
            <Swatches colors={SWATCHES} />
            <div className={`mt-[10px] flex h-[21px] w-[222px] items-center justify-center leading-[14px] ${BTN}`}><span><Key label="_P_ick Screen Color" /></span></div>
            <div className="mt-[57px] -ml-px pt-px leading-[15px]"><Key label="_C_ustom colors" /></div>
            <Swatches colors={Array(16).fill("#ffffff")} />
            <div className={`mt-[10px] flex h-[22px] w-[222px] items-center justify-center leading-[14px] ${BTN}`}><span><Key label="_A_dd to Custom Colors" /></span></div>
          </div>
          <div className="pt-[20px]">
            <div className="flex">
              <div className={`relative h-[202px] w-[222px] bg-[linear-gradient(to_top,#c8c8c8,rgba(200,200,200,0)),linear-gradient(to_right,#c80000,#c800c8,#0000c8,#00c8c8,#00c800,#c8c800,#c80000)] ${sunken}`}>
                <div className="absolute -right-px -bottom-px h-[2px] w-[11px] bg-black" />
                <div className="absolute -right-px -bottom-px h-[11px] w-[2px] bg-black" />
              </div>
              <div className={`ml-[16px] h-[202px] w-[15px] bg-linear-to-b from-white to-black ${sunken}`} />
              <svg width="5" height="10" viewBox="0 0 5 10" className="mt-[147px] block"><path d="M5 0V10L0 5Z" fill="#fff" /></svg>
            </div>
            <div className="mt-[21px] flex h-[116px]">
              <div className={`h-[116px] w-[60px] bg-[#3e3e3e] ${sunken}`} />
              <div className="flex flex-col pt-px">
                <SpinRow a="Hu_e_:" av="0" b="_R_ed:" bv="62" zero />
                <SpinRow a="_S_at:" av="0" b="_G_reen:" bv="62" zero />
                <SpinRow a="_V_al:" av="62" b="Bl_u_e:" bv="62" />
                <div className="mt-[5px] flex h-[23px] items-center leading-[14px]">
                  <div className="w-[43px] text-right"><Key label="_H_TML:" /></div>
                  <div className="ml-[7px] flex h-[23px] w-[125px] items-center rounded-[2px] border border-[#4796e6] bg-[#191919] pl-[2px]">
                    <span className="border-r border-white bg-[#2a82da] leading-[15px] text-[#0c1a28]">#3e3e3e</span>
                  </div>
                </div>
              </div>
            </div>
            <div className="mt-[13px] flex gap-[7px] pl-[106px] leading-[14px]">
              <div className={`flex h-[21px] w-[78px] items-center justify-center ${BTN}`}><span><Key label="_C_ancel" /></span></div>
              <div className="-mt-px flex h-[23px] w-[80px] items-center justify-center rounded-[2px] border border-[#4796e6] bg-linear-to-b from-[#50555e] to-[#454a53]"><span><Key label="_O_K" /></span></div>
            </div>
          </div>
        </div>
      </div>
    </div>
  );
}

/* ---------- panel ---------- */

function Taskbar() {
  return (
    <div className={`absolute inset-x-0 bottom-0 flex h-[33px] items-center border-t border-[#262626] bg-[#383838] text-[13px] text-[#d8d8d8] ${UI}`}>
      <svg width="24" height="24" viewBox="0 0 24 24" className="ml-[4px] block" fill="none" stroke="#d6d6d6">
        <circle cx="12" cy="12" r="11" strokeWidth="1.800" />
        <path d="M6 6.500V14Q6 17 9 17H15.500Q18 17 18 14.500V11.500Q18 9.500 16 9.500T14 11.500V14M14 14V11.500Q14 9.500 12 9.500T10 11.500V14" strokeWidth="1.700" />
      </svg>
      <div className="ml-[10px] h-[19px] w-[20px] rounded-[1px] border-b border-[#c99848] bg-[#f8c471]" />
      <div className="ml-[9px] h-[23px] w-[2px] bg-[#8a8a8a]" />
      <svg width="20" height="21" viewBox="0 0 20 21" className="ml-[9px] block">
        <rect width="20" height="20.500" rx="3" fill="#f96b37" />
        <circle cx="10" cy="11" r="7" fill="#fff" />
        <circle cx="10" cy="11" r="2.800" fill="#f96b37" />
        <path d="M9 2L12 8L6.500 9L4 6Z" fill="#f96b37" />
      </svg>
      <div className="ml-[11px] h-[22px] w-[22px] rounded-[4px] border border-[#111111] bg-linear-to-b from-[#3c3c3c] to-[#1c1c1c] pt-[2px] pl-[2px] font-['DejaVu_Sans_Mono',monospace] text-[7px] leading-[8px] font-bold text-white">$_</div>
      <svg width="20" height="19" viewBox="0 0 20 19" className="ml-[11px] block">
        <path d="M0 1H7L9 3H20V17H0Z" fill="#e0a850" />
        <path d="M0 5H20V18H0Z" fill="#f8c471" />
        <path d="M2 5H18V7H2Z" fill="#f3f0ea" />
      </svg>
      <div className="ml-[10px]"><QcadIcon size={15} /></div>
      <span className="ml-[9px] w-[172px] pt-[2px]">Untitled 1 - QCAD</span>
      <div className="flex h-full w-[200px] items-center bg-[#209fe0] text-white">
        <div className="ml-[4px] h-[13px] w-[14px] border border-t-[3px] border-[#8a8a80] border-t-[#2a5ca8] bg-[#e6e6e0]" />
        <span className="ml-[10px] pt-[2px]">Select Color</span>
      </div>
      <div className="ml-auto flex items-center">
        <svg width="220" height="26" viewBox="1692 1051 220 26" className="block" fill="#d6d6d6">
          <path d="M1705 1053C1700 1054 1699.500 1059 1699 1065L1696 1070V1071.500H1714V1070L1711 1065C1710.500 1059 1710 1054 1705 1053ZM1702.500 1072.500H1707.500Q1705 1076 1702.500 1072.500Z" />
          <path d="M1728.700 1056.700H1747.300V1074.300H1728.700Z" fill="none" stroke="#d6d6d6" strokeWidth="2.400" />
          <path d="M1735 1056H1741V1059H1735ZM1736.500 1060.500H1739.500V1067H1736.500ZM1736.500 1068.500H1739.500V1071.500H1736.500Z" />
          <circle cx="1738" cy="1054.500" r="2" fill="none" stroke="#d6d6d6" strokeWidth="1.300" />
          <path d="M1770 1053.500Q1775 1057 1781 1056.500Q1781 1070 1770 1075Q1759 1070 1759 1056.500Q1765 1057 1770 1053.500Z" fill="none" stroke="#d6d6d6" strokeWidth="1.800" />
          <path d="M1770 1057.500Q1773 1059.500 1777 1059.500Q1776.500 1068 1770 1071.500Q1763.500 1068 1763 1059.500Q1767 1059.500 1770 1057.500Z" />
          <path fillRule="evenodd" d="M1793 1053H1811Q1813 1053 1813 1055V1073Q1813 1075 1811 1075H1793Q1791 1075 1791 1073V1055Q1791 1053 1793 1053ZM1796.500 1056V1058.500H1794V1072H1810V1058.500H1807.500V1056Z" />
          <circle cx="1835" cy="1064" r="10.700" />
          <path d="M1837.500 1055L1829 1066H1834L1832.500 1073.500L1841 1062H1836Z" fill="#383838" />
          <path d="M1855 1060.500H1859L1864.500 1055V1073L1859 1067.500H1855Z" />
          <path d="M1867 1060Q1869.500 1064 1867 1068M1870 1057Q1875 1064 1870 1071" fill="none" stroke="#d6d6d6" strokeWidth="2.200" />
          <path d="M1873.500 1054Q1880.500 1064 1873.500 1074" fill="none" stroke="#7d7d7d" strokeWidth="2.200" />
        </svg>
        <span className="-ml-[27px] w-[35px] pt-[2px]">16:56</span>
      </div>
    </div>
  );
}

export default function App() {
  return (
    <div className={`relative h-[1080px] w-[1920px] overflow-hidden bg-[#1c5eb4] text-[12px] text-[#e8e8e8] ${FONT}`}>
      <div className="absolute top-[28px] left-[43px] flex w-[60px] flex-col items-center">
        <div className="pl-[2px]"><QcadIcon size={42} /></div>
        <span className="mt-[10px] leading-[15px] text-white [text-shadow:0_1px_2px_rgba(0,0,0,0.8)]">QCAD</span>
      </div>
      <MainWindow />
      <PropertyEditor />
      <Preferences />
      <ColorDialog />
      <svg width="18" height="24" viewBox="0 0 18 24" className="absolute top-[751px] left-[1235px] block">
        <path d="M2 2.500V20.500Q3 22 4.500 20.500L8.500 16L15 15.500Q17 14.500 15.500 13L4 2Q2.500 1 2 2.500Z" fill="#000" stroke="#fff" strokeWidth="1.300" />
      </svg>
      <Taskbar />
    </div>
  );
}
